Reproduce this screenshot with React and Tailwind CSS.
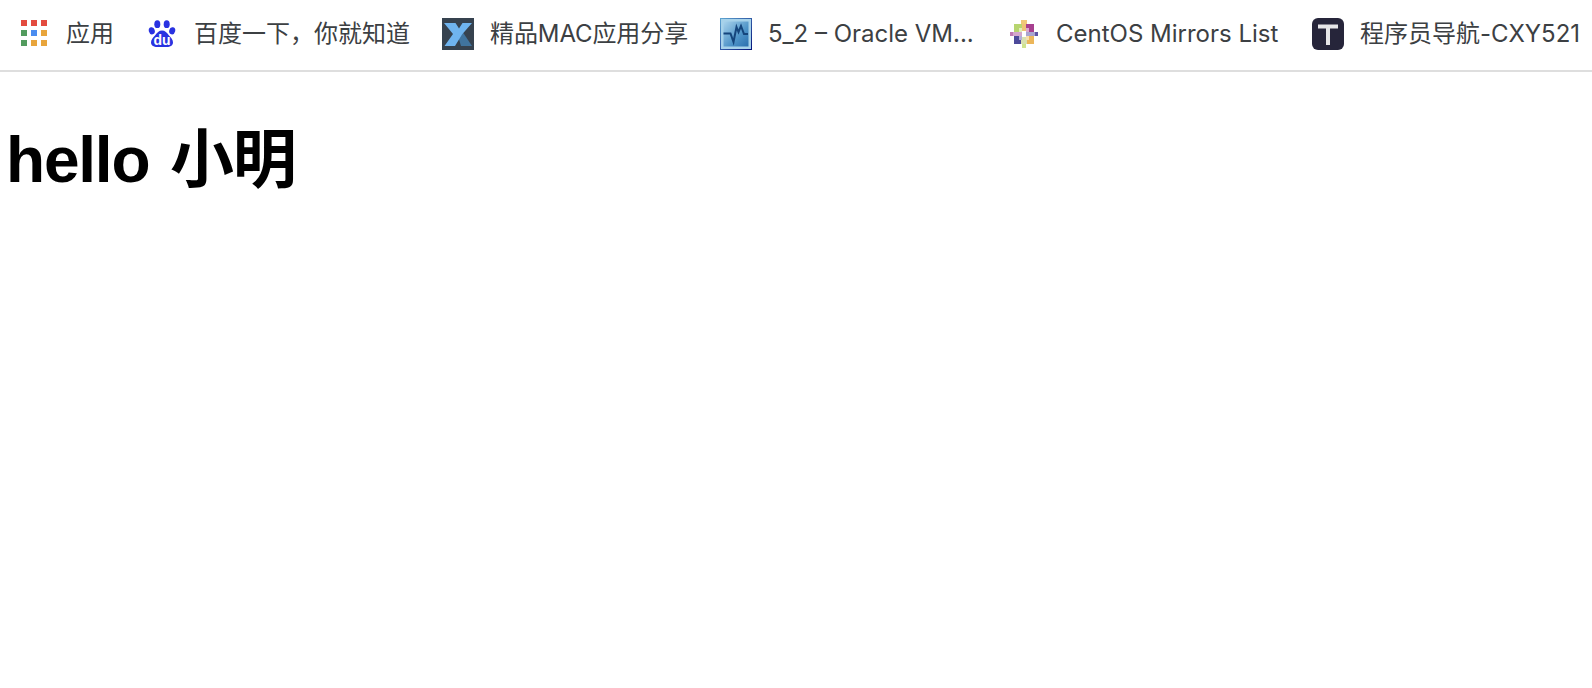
import React from "react"

const AppsIcon = () => {
  const colors = ["#e34b3f", "#e34b3f", "#e34b3f", "#529b5e", "#4a8cf0", "#e8a53c", "#529b5e", "#e8a53c", "#e8a53c"]
  return (
    <svg width="32" height="32" viewBox="0 0 32 32">
      {colors.map((c, i) => (
        <rect key={i} x={3 + (i % 3) * 10} y={2 + Math.floor(i / 3) * 10} width="6" height="6" fill={c} />
      ))}
    </svg>
  )
}

const BaiduIcon = () => (
  <svg width="32" height="32" viewBox="0 0 32 32">
    <g fill="#2932e1">
      <ellipse cx="11.300" cy="6.200" rx="3" ry="3.900" />
      <ellipse cx="20.700" cy="6.200" rx="3" ry="3.900" />
      <ellipse cx="5.800" cy="12.800" rx="3" ry="3.600" transform="rotate(-15 5.800 12.800)" />
      <ellipse cx="26.200" cy="12.800" rx="3" ry="3.600" transform="rotate(15 26.200 12.800)" />
      <path d="M16 12.500c3 0 5 2 7 5c2 2 4 4 4 7c0 3-3 4.500-6 4.500h-10c-3 0-6-1.500-6-4.500c0-3 2-5 4-7c2-3 4-5 7-5z" />
    </g>
    <text x="16" y="26.500" textAnchor="middle" fill="#fff" fontSize="14" fontWeight="700" fontFamily="Liberation Sans, sans-serif">du</text>
  </svg>
)

const XIcon = () => (
  <svg width="32" height="32" viewBox="0 0 32 32">
    <rect width="32" height="32" fill="#36424f" />
    <path d="M16 18l4-5 10 15H19z" fill="#40749f" />
    <path d="M2 5h11.500l3.500 5.500L20.500 5H30L20 16.500 13 28H2.500L11 16z" fill="#6fb4ef" />
  </svg>
)

const MonitorIcon = () => (
  <svg width="32" height="32" viewBox="0 0 32 32">
    <defs>
      <linearGradient id="vmGrad" x1="0" y1="0" x2="1" y2="1">
        <stop offset="0" stopColor="#a9d3ec" />
        <stop offset="0.6" stopColor="#4f94c8" />
        <stop offset="1" stopColor="#2a6fae" />
      </linearGradient>
      <linearGradient id="vmEdge" x1="0" y1="0" x2="1" y2="1">
        <stop offset="0" stopColor="#5fa6d2" />
        <stop offset="1" stopColor="#04127a" />
      </linearGradient>
    </defs>
    <rect width="32" height="32" fill="url(#vmEdge)" />
    <rect x="1" y="1" width="30" height="30" fill="#a7d2ea" />
    <rect x="3.500" y="3.500" width="25" height="25" fill="url(#vmGrad)" />
    <path d="M3.500 15.500h7l3 8.500 3-15 2 5 2.500-6 3 8h4" fill="none" stroke="#15457c" strokeWidth="2" />
  </svg>
)

const CentosIcon = () => (
  <svg width="32" height="32" viewBox="0 0 32 32" shapeRendering="crispEdges">
    <rect x="13" y="2" width="6" height="4" fill="#f0c878" />
    <rect x="14" y="26" width="4" height="4" fill="#cfe38f" />
    <rect x="2" y="14" width="5" height="4" fill="#c07ab4" />
    <rect x="25" y="14" width="5" height="4" fill="#5d55a6" />
    <rect x="13" y="6" width="6" height="8" fill="#eec277" />
    <rect x="6" y="6" width="8" height="8" fill="#b7d56f" />
    <rect x="18" y="6" width="8" height="8" fill="#a7408f" />
    <rect x="6" y="18" width="8" height="8" fill="#4d4a9a" />
    <rect x="18" y="18" width="8" height="8" fill="#ecb65a" />
    <rect x="13" y="18" width="6" height="8" fill="#d8e0b0" />
    <rect x="5" y="14" width="10" height="4" fill="#d4a6cc" />
    <rect x="17" y="14" width="10" height="4" fill="#a9a4d0" />
    <rect x="14" y="13" width="4" height="6" fill="#ffffff" />
    <rect x="11" y="10" width="3" height="4" fill="#dfeeb8" />
    <rect x="18" y="10" width="3" height="4" fill="#d9a8cf" />
    <rect x="11" y="18" width="3" height="4" fill="#b1aed6" />
    <rect x="18" y="18" width="3" height="4" fill="#f7dfae" />
  </svg>
)

const TIcon = () => (
  <svg width="32" height="32" viewBox="0 0 32 32">
    <rect width="32" height="32" rx="6" fill="#26253a" />
    <path d="M6 6.500h20v4h-8v16.500h-4v-16.500H6z" fill="#e6e6e8" />
  </svg>
)

export default function App() {
  return (
    <div className="min-h-[688px] bg-white font-['Inter','Noto_Sans_CJK_SC',sans-serif]">
      <div className="flex h-[72px] items-center gap-8 overflow-hidden border-b-2 border-[#dedede] pl-[18px] pb-[2px] text-2xl leading-8 text-[#3c4043]">
        <div className="flex shrink-0 items-center gap-4">
          <AppsIcon />
          <span className="w-12 whitespace-nowrap">应用</span>
        </div>
        <div className="flex shrink-0 items-center gap-4">
          <BaiduIcon />
          <span className="w-[216px] whitespace-nowrap">百度一下，你就知道</span>
        </div>
        <div className="flex shrink-0 items-center gap-4">
          <XIcon />
          <span className="w-[198px] whitespace-nowrap tracking-[-0.1px]">精品MAC应用分享</span>
        </div>
        <div className="flex shrink-0 items-center gap-4">
          <MonitorIcon />
          <span className="w-[208px] whitespace-nowrap">5_2 – Oracle VM...</span>
        </div>
        <div className="flex shrink-0 items-center gap-4">
          <CentosIcon />
          <span className="w-[224px] whitespace-nowrap">CentOS Mirrors List</span>
        </div>
        <div className="flex shrink-0 items-center gap-4">
          <TIcon />
          <span className="whitespace-nowrap">程序员导航-CXY521</span>
        </div>
      </div>
      <h1 className="mx-[6px] my-10 font-['Liberation_Sans','Noto_Sans_CJK_SC',sans-serif] text-[64px] font-bold tracking-[-1.2px] [word-spacing:4px] text-black">
        hello 小明
      </h1>
    </div>
  )
}
